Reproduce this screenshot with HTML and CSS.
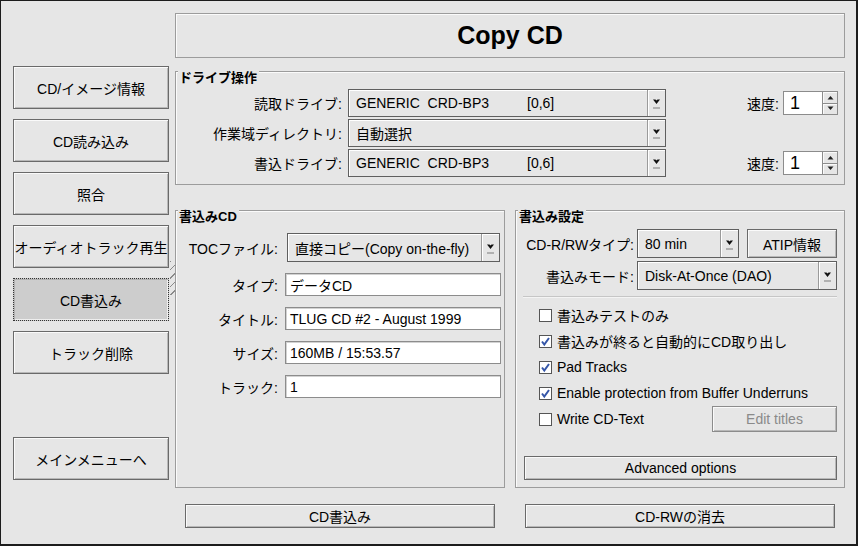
FILE: index.html
```html
<!DOCTYPE html>
<html lang="ja">
<head>
    <meta charset="UTF-8">
    <title>Copy CD</title>
    <link rel="stylesheet" href="styles.css">
</head>
<body>

<div class="window">

    <div class="sidebar">
        <button class="btn navbtn">CD/イメージ情報</button>
        <button class="btn navbtn">CD読み込み</button>
        <button class="btn navbtn">照合</button>
        <button class="btn navbtn">オーディオトラック再生</button>
        <button class="btn navbtn active">CD書込み</button>
        <button class="btn navbtn">トラック削除</button>
        <div class="navgap"></div>
        <button class="btn navbtn">メインメニューへ</button>
    </div>

    <div class="main">
        <div class="titlebox">Copy CD</div>

        <!-- drive settings -->
        <div class="frame drive">
            <span class="frame-title">ドライブ操作</span>

            <div class="drive-row">
                <span class="lbl drive-lbl">読取ドライブ:</span>
                <div class="combo drive-combo">
                    <span class="combo-text"><span class="dev">GENERIC  CRD-BP3</span>[0,6]</span>
                    <span class="combo-arrow"><svg width="9" height="12" viewBox="0 0 9 12"><path d="M1 1.5h2.5l1 1 1-1H8L4.5 6z" fill="#111"/><rect x="1" y="9" width="7" height="2" fill="#b0b0b0"/></svg></span>
                </div>
                <div class="speed">
                    <span>速度:</span>
                    <div class="spin">
                        <span class="spin-val">1</span>
                        <span class="spin-btns">
                            <span class="spin-b"><svg width="7" height="5" viewBox="0 0 7 5"><path d="M0.5 4.5L3.5 1l3 3.5z" fill="#222"/></svg></span>
                            <span class="spin-b"><svg width="7" height="5" viewBox="0 0 7 5"><path d="M0.5 0.5L3.5 4l3-3.5z" fill="#222"/></svg></span>
                        </span>
                    </div>
                </div>
            </div>

            <div class="drive-row">
                <span class="lbl drive-lbl">作業域ディレクトリ:</span>
                <div class="combo drive-combo">
                    <span class="combo-text">自動選択</span>
                    <span class="combo-arrow"><svg width="9" height="12" viewBox="0 0 9 12"><path d="M1 1.5h2.5l1 1 1-1H8L4.5 6z" fill="#111"/><rect x="1" y="9" width="7" height="2" fill="#b0b0b0"/></svg></span>
                </div>
            </div>

            <div class="drive-row">
                <span class="lbl drive-lbl">書込ドライブ:</span>
                <div class="combo drive-combo">
                    <span class="combo-text"><span class="dev">GENERIC  CRD-BP3</span>[0,6]</span>
                    <span class="combo-arrow"><svg width="9" height="12" viewBox="0 0 9 12"><path d="M1 1.5h2.5l1 1 1-1H8L4.5 6z" fill="#111"/><rect x="1" y="9" width="7" height="2" fill="#b0b0b0"/></svg></span>
                </div>
                <div class="speed">
                    <span>速度:</span>
                    <div class="spin">
                        <span class="spin-val">1</span>
                        <span class="spin-btns">
                            <span class="spin-b"><svg width="7" height="5" viewBox="0 0 7 5"><path d="M0.5 4.5L3.5 1l3 3.5z" fill="#222"/></svg></span>
                            <span class="spin-b"><svg width="7" height="5" viewBox="0 0 7 5"><path d="M0.5 0.5L3.5 4l3-3.5z" fill="#222"/></svg></span>
                        </span>
                    </div>
                </div>
            </div>
        </div>

        <div class="lower">

            <!-- cd info -->
            <div class="frame">
                <span class="frame-title">書込みCD</span>
                <div class="wcd-grid">
                    <span class="lbl">TOCファイル:</span>
                    <div class="combo toc-combo">
                        <span class="combo-text">直接コピー(Copy on-the-fly)</span>
                        <span class="combo-arrow"><svg width="9" height="12" viewBox="0 0 9 12"><path d="M1 1.5h2.5l1 1 1-1H8L4.5 6z" fill="#111"/><rect x="1" y="9" width="7" height="2" fill="#b0b0b0"/></svg></span>
                    </div>

                    <span class="lbl">タイプ:</span>
                    <div class="field">データCD</div>

                    <span class="lbl">タイトル:</span>
                    <div class="field">TLUG CD #2 - August 1999</div>

                    <span class="lbl">サイズ:</span>
                    <div class="field">160MB / 15:53.57</div>

                    <span class="lbl">トラック:</span>
                    <div class="field">1</div>
                </div>
            </div>

            <!-- write options -->
            <div class="frame wset">
                <span class="frame-title">書込み設定</span>
                <div class="ws-grid">
                    <span class="lbl">CD-R/RWタイプ:</span>
                    <div class="ws-line">
                        <div class="combo type-combo">
                            <span class="combo-text">80 min</span>
                            <span class="combo-arrow"><svg width="9" height="12" viewBox="0 0 9 12"><path d="M1 1.5h2.5l1 1 1-1H8L4.5 6z" fill="#111"/><rect x="1" y="9" width="7" height="2" fill="#b0b0b0"/></svg></span>
                        </div>
                        <button class="btn atip">ATIP情報</button>
                    </div>

                    <span class="lbl">書込みモード:</span>
                    <div class="combo">
                        <span class="combo-text">Disk-At-Once (DAO)</span>
                        <span class="combo-arrow"><svg width="9" height="12" viewBox="0 0 9 12"><path d="M1 1.5h2.5l1 1 1-1H8L4.5 6z" fill="#111"/><rect x="1" y="9" width="7" height="2" fill="#b0b0b0"/></svg></span>
                    </div>
                </div>

                <div class="sep"></div>

                <div class="checks">
                    <div class="check"><span class="cbox"></span>書込みテストのみ</div>
                    <div class="check"><span class="cbox"><svg width="11" height="11" viewBox="0 0 11 11"><path d="M2 5.5l2.3 3L9 2" fill="none" stroke="#3556a8" stroke-width="2"/></svg></span>書込みが終ると自動的にCD取り出し</div>
                    <div class="check"><span class="cbox"><svg width="11" height="11" viewBox="0 0 11 11"><path d="M2 5.5l2.3 3L9 2" fill="none" stroke="#3556a8" stroke-width="2"/></svg></span>Pad Tracks</div>
                    <div class="check"><span class="cbox"><svg width="11" height="11" viewBox="0 0 11 11"><path d="M2 5.5l2.3 3L9 2" fill="none" stroke="#3556a8" stroke-width="2"/></svg></span>Enable protection from Buffer Underruns</div>
                    <div class="check"><span class="cbox"></span>Write CD-Text<button class="btn edit-titles">Edit titles</button></div>
                </div>

                <button class="btn adv">Advanced options</button>
            </div>

            <button class="btn wide">CD書込み</button>
            <button class="btn wide">CD-RWの消去</button>
        </div>
    </div>

</div>

</body>
</html>
```

FILE: styles.css
```css
*{
    box-sizing: border-box;
}

body{
    margin: 0;
    background-color: #e6e6e6;
    font-family: "Liberation Sans", "Noto Sans CJK JP", sans-serif;
    font-size: 14px;
    color: #000;
}

.window{
    width: 858px;
    height: 546px;
    border-style: solid;
    border-color: #1c1c1c;
    border-width: 1px 2px 2px 1px;
    padding: 12px 11px 0 12px;
    display: grid;
    grid-template-columns: 156px 670px;
    column-gap: 6px;
    align-items: start;
}

/* buttons */
.btn{
    font: inherit;
    color: #000;
    background-color: #e6e6e6;
    border: 1px solid #6a6a6a;
    box-shadow: inset 1px 1px 0 #fafafa, inset -1px -1px 0 #b8b8b8;
    padding: 0;
    margin: 0;
}

.sidebar{
    display: flex;
    flex-direction: column;
    gap: 10px;
    padding-top: 53px;
}

.navbtn{
    height: 43px;
    white-space: nowrap;
}

.navbtn.active{
    position: relative;
    background-color: #cdcdcd;
    border: 1px dotted #333;
    box-shadow: inset 1px 1px 0 #b0b0b0, inset -1px -1px 0 #eee;
}

.navbtn.active::after{
    content: "";
    position: absolute;
    right: -9px;
    top: -18px;
    width: 7px;
    height: 34px;
    background: repeating-linear-gradient(135deg, #8a8a8a 0 1px, transparent 1px 6px);
}

.navgap{
    height: 43px;
}

.main{
    display: flex;
    flex-direction: column;
}

.titlebox{
    height: 45px;
    margin-bottom: 13px;
    border: 1px solid #9c9c9c;
    box-shadow: inset 1px 1px 0 #fbfbfb;
    display: flex;
    align-items: center;
    justify-content: center;
    font-size: 25px;
    font-weight: bold;
}

/* frames */
.frame{
    position: relative;
    border: 1px solid #9c9c9c;
    box-shadow: inset 1px 1px 0 #fbfbfb;
}

.frame-title{
    position: absolute;
    left: 2px;
    top: -2px;
    padding: 0 2px 0 1px;
    font-size: 13px;
    font-weight: bold;
    line-height: 15px;
    background-color: #e6e6e6;
}

.lbl{
    text-align: right;
    white-space: nowrap;
}

.drive{
    height: 114px;
    margin-bottom: 25px;
    padding: 17px 6px 0 0;
    display: flex;
    flex-direction: column;
    gap: 2px;
}

.drive-row{
    height: 28px;
    display: flex;
    align-items: center;
}

.drive-lbl{
    width: 166px;
}

.drive-combo{
    width: 318px;
    margin-left: 6px;
}

/* combo boxes */
.combo{
    display: flex;
    height: 28px;
    border: 1px solid #5f5f5f;
    box-shadow: inset 1px 1px 0 #fff;
    background-color: #e6e6e6;
}

.combo-text{
    flex: 1;
    display: flex;
    align-items: center;
    padding-left: 7px;
    white-space: pre;
}

.dev{
    display: inline-block;
    width: 171px;
}

.combo-arrow{
    width: 18px;
    border-left: 1px solid #9a9a9a;
    box-shadow: inset 1px 0 0 #fff;
    display: flex;
    align-items: center;
    justify-content: center;
    padding-top: 2px;
}

/* spin */
.speed{
    margin-left: auto;
    display: flex;
    align-items: center;
    gap: 4px;
}

.spin{
    display: flex;
    height: 24px;
}

.spin-val{
    width: 40px;
    background-color: #fff;
    border: 1px solid #8c8c8c;
    padding-left: 6px;
    font-size: 18px;
    line-height: 22px;
}

.spin-btns{
    width: 15px;
    display: flex;
    flex-direction: column;
}

.spin-b{
    flex: 1;
    border: 1px solid #8c8c8c;
    border-left: none;
    box-shadow: inset 1px 1px 0 #fafafa;
    display: flex;
    align-items: center;
    justify-content: center;
}

.spin-b + .spin-b{
    border-top: none;
}

/* lower area */
.lower{
    display: grid;
    grid-template-columns: 330px 330px;
    grid-template-rows: 278px 24px;
    column-gap: 10px;
    row-gap: 16px;
}

.wcd-grid{
    display: grid;
    grid-template-columns: 102px 216px;
    column-gap: 7px;
    row-gap: 11px;
    padding-top: 22px;
    align-items: center;
}

.toc-combo{
    height: 29px;
    margin-left: 2px;
    margin-right: 1px;
}

.field{
    height: 23px;
    background-color: #fff;
    border: 1px solid #8c8c8c;
    box-shadow: inset 1px 1px 0 #d2d2d2;
    padding-left: 4px;
    display: flex;
    align-items: center;
    white-space: nowrap;
}

.wset{
    display: flex;
    flex-direction: column;
}

.ws-grid{
    display: grid;
    grid-template-columns: 110px 200px;
    grid-auto-rows: 29px;
    column-gap: 3px;
    row-gap: 3px;
    padding: 18px 0 0 8px;
    align-items: center;
}

.ws-grid .combo{
    height: 29px;
}

.ws-line{
    display: flex;
    gap: 8px;
}

.type-combo{
    width: 102px;
}

.atip{
    width: 90px;
    height: 29px;
}

.sep{
    margin: 6px 7px 0 7px;
    height: 2px;
    border-top: 1px solid #c6c6c6;
    border-bottom: 1px solid #f4f4f4;
}

.checks{
    padding: 4px 7px 0 23px;
}

.check{
    height: 26px;
    display: flex;
    align-items: center;
    white-space: nowrap;
}

.cbox{
    width: 13px;
    height: 13px;
    margin-right: 5px;
    background-color: #fff;
    border: 1px solid #555;
    display: flex;
    align-items: center;
    justify-content: center;
}

.edit-titles{
    margin-left: auto;
    width: 125px;
    height: 26px;
    color: #8a8a8a;
    border-color: #8c8c8c;
}

.adv{
    margin: auto 7px 7px 8px;
    height: 24px;
}

.wide{
    justify-self: center;
    width: 310px;
    height: 24px;
}
```
